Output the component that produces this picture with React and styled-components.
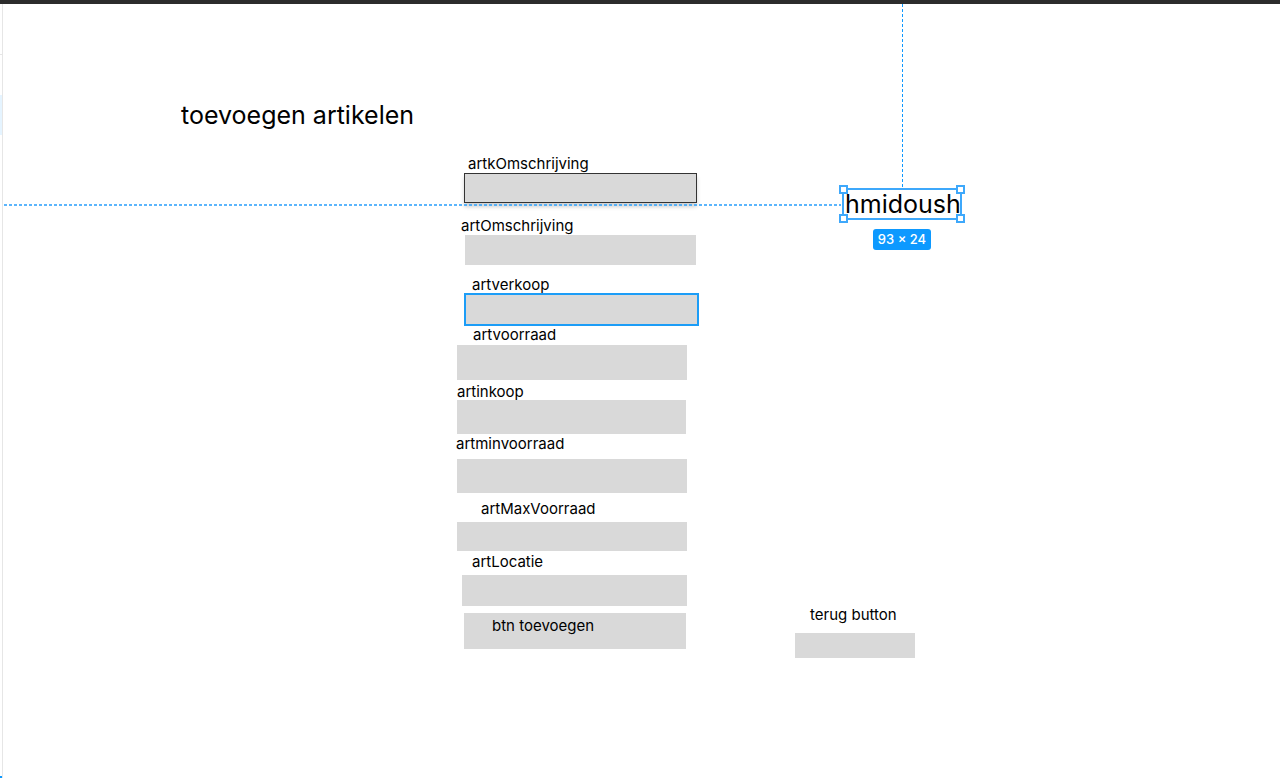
import React from 'react';
import styled, { createGlobalStyle } from 'styled-components';

const FIGMA_BLUE = '#0d99ff';
const GUIDE_BLUE = '#3ea8fb';
const FILL = '#d9d9d9';

const fields = [
  { label: 'artkOmschrijving', top: 0, labelX: 12, boxX: 8, w: 233, h: 30, gap: 0, variant: 'outlined' },
  { label: 'artOmschrijving', top: 15, labelX: 5, boxX: 9, w: 231, h: 30, gap: 0 },
  { label: 'artverkoop', top: 12, labelX: 16, boxX: 8, w: 235, h: 33, gap: -1, variant: 'hover' },
  { label: 'artvoorraad', top: 1, labelX: 17, boxX: 1, w: 230, h: 35, gap: 1 },
  { label: 'artinkoop', top: 4, labelX: 1, boxX: 1, w: 229, h: 34, gap: -1 },
  { label: 'artminvoorraad', top: 2, labelX: 0, boxX: 1, w: 230, h: 34, gap: 6 },
  { label: 'artMaxVoorraad', top: 8, labelX: 25, boxX: 1, w: 230, h: 29, gap: 4 },
  { label: 'artLocatie', top: 3, labelX: 16, boxX: 6, w: 225, h: 31, gap: 4 },
];

const App = () => (
  <Page>
    <GlobalStyle />
    <TopBar />
    <Workspace>
      <SidePanel>
        <PanelSection />
        <PanelHighlight />
        <PanelCorner />
      </SidePanel>
      <Canvas>
        <HorizontalGuide />
        <VerticalGuide />
        <Title>toevoegen artikelen</Title>
        <Row>
          <FormColumn>
            {fields.map((f) => (
              <Field key={f.label} $top={f.top}>
                <Label $x={f.labelX}>{f.label}</Label>
                <InputBox $x={f.boxX} $w={f.w} $h={f.h} $gap={f.gap} $variant={f.variant} />
              </Field>
            ))}
            <AddButton>btn toevoegen</AddButton>
          </FormColumn>
          <RightColumn>
            <SelectedText>
              hmidoush
              <Handle $corner="tl" />
              <Handle $corner="tr" />
              <Handle $corner="bl" />
              <Handle $corner="br" />
              <SizeBadge>93 × 24</SizeBadge>
            </SelectedText>
            <BackGroup>
              <Label $x={15}>terug button</Label>
              <BackBox />
            </BackGroup>
          </RightColumn>
        </Row>
      </Canvas>
    </Workspace>
  </Page>
);

const GlobalStyle = createGlobalStyle`
  html, body {
    margin: 0;
    padding: 0;
    background: #ffffff;
    overflow: hidden;
  }
  body {
    font-family: Inter, "Noto Sans", "Liberation Sans", sans-serif;
    color: #000000;
  }
  * {
    box-sizing: border-box;
  }
`;

const Page = styled.div`
  display: flex;
  flex-direction: column;
  width: 1280px;
  height: 778px;
`;

const TopBar = styled.div`
  height: 4px;
  flex-shrink: 0;
  background: #2c2c2c;
`;

const Workspace = styled.div`
  display: flex;
  flex: 1;
  min-height: 0;
`;

const SidePanel = styled.div`
  display: flex;
  flex-direction: column;
  width: 3px;
  flex-shrink: 0;
  background: #ffffff;
  border-right: 1px solid #e6e6e6;
`;

const PanelSection = styled.div`
  height: 51px;
  border-bottom: 1px solid #e6e6e6;
`;

const PanelHighlight = styled.div`
  height: 40px;
  margin-top: 40px;
  background: #e5f4ff;
`;

const PanelCorner = styled.div`
  height: 2px;
  margin-top: auto;
  background: ${FIGMA_BLUE};
`;

const Canvas = styled.div`
  position: relative;
  flex: 1;
  padding-top: 97px;
  background: #ffffff;
`;

const HorizontalGuide = styled.div`
  position: absolute;
  top: 200px;
  left: 1px;
  width: 837px;
  height: 2px;
  background: linear-gradient(to right, ${GUIDE_BLUE} 3px, transparent 3px) 0 0 / 5px 2px repeat-x;
  opacity: 0.85;
`;

const VerticalGuide = styled.div`
  position: absolute;
  top: 0;
  left: 899px;
  width: 1px;
  height: 184px;
  background: linear-gradient(to bottom, ${FIGMA_BLUE} 3px, transparent 3px) 0 0 / 1px 5px repeat-y;
`;

const Title = styled.h1`
  margin: 0 0 0 178px;
  font-size: 25px;
  line-height: 29px;
  font-weight: 400;
`;

const Row = styled.div`
  display: flex;
  margin-top: 26px;
`;

const FormColumn = styled.div`
  display: flex;
  flex-direction: column;
  width: 244px;
  margin-left: 453px;
`;

const Field = styled.div`
  display: flex;
  flex-direction: column;
  margin-top: ${(p) => p.$top}px;
`;

const Label = styled.span`
  display: block;
  height: 17px;
  margin-left: ${(p) => p.$x}px;
  font-size: 15px;
  line-height: 16px;
  white-space: nowrap;
`;

const InputBox = styled.div`
  width: ${(p) => p.$w}px;
  height: ${(p) => p.$h}px;
  margin-left: ${(p) => p.$x}px;
  margin-top: ${(p) => p.$gap}px;
  background: ${FILL};
  border: ${(p) =>
    p.$variant === 'outlined'
      ? '1px solid #333333'
      : p.$variant === 'hover'
        ? `2px solid #1c9df7`
        : 'none'};
  box-shadow: ${(p) => (p.$variant === 'outlined' ? '0 4px 4px rgba(0, 0, 0, 0.18)' : 'none')};
`;

const AddButton = styled.div`
  width: 222px;
  height: 36px;
  margin: 7px 0 0 8px;
  padding: 4px 0 0 28px;
  background: ${FILL};
  font-size: 15px;
  line-height: 18px;
`;

const RightColumn = styled.div`
  display: flex;
  flex-direction: column;
  align-items: flex-start;
  margin-left: 95px;
`;

const SelectedText = styled.div`
  position: relative;
  width: 120px;
  height: 32px;
  margin: 32px 0 0 47px;
  padding-left: 1px;
  border: 2px solid ${GUIDE_BLUE};
  font-size: 25px;
  line-height: 28px;
  white-space: nowrap;
`;

const Handle = styled.span`
  position: absolute;
  width: 9px;
  height: 9px;
  background: #ffffff;
  border: 2px solid ${GUIDE_BLUE};
  ${(p) => (p.$corner[0] === 't' ? 'top: -5px;' : 'bottom: -5px;')}
  ${(p) => (p.$corner[1] === 'l' ? 'left: -5px;' : 'right: -5px;')}
`;

const SizeBadge = styled.span`
  position: absolute;
  top: 39px;
  left: 50%;
  transform: translateX(-50%);
  width: 58px;
  height: 21px;
  border-radius: 3px;
  background: ${FIGMA_BLUE};
  color: #ffffff;
  font-size: 13px;
  line-height: 21px;
  font-weight: 500;
  text-align: center;
`;

const BackGroup = styled.div`
  display: flex;
  flex-direction: column;
  margin-top: 387px;
`;

const BackBox = styled.div`
  width: 120px;
  height: 25px;
  margin-top: 9px;
  background: ${FILL};
`;

export default App;
